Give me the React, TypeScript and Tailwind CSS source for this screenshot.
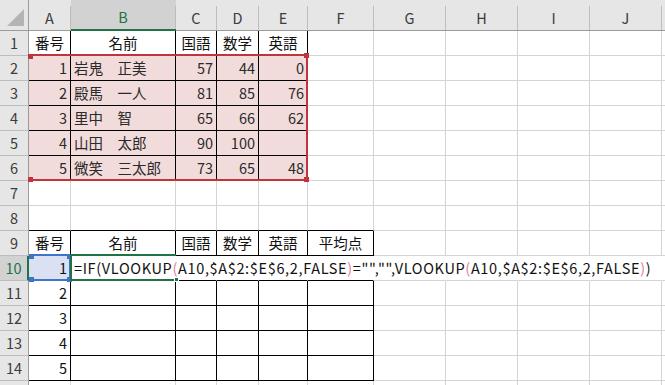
const COLS = ["A", "B", "C", "D", "E", "F", "G", "H", "I", "J", ""];
const ROWS = Array.from({ length: 15 }, (_, i) => i + 1);

const GRID_COLS = "grid grid-cols-[29px_42px_105px_41px_42px_49px_66px_72px_72px_72px_72px_1fr] grid-rows-[31px_repeat(15,25px)]";

const cells: Record<string, string> = {
  A1: "番号", B1: "名前", C1: "国語", D1: "数学", E1: "英語",
  A2: "1", B2: "岩鬼　正美", C2: "57", D2: "44", E2: "0",
  A3: "2", B3: "殿馬　一人", C3: "81", D3: "85", E3: "76",
  A4: "3", B4: "里中　智", C4: "65", D4: "66", E4: "62",
  A5: "4", B5: "山田　太郎", C5: "90", D5: "100",
  A6: "5", B6: "微笑　三太郎", C6: "73", D6: "65", E6: "48",
  A9: "番号", B9: "名前", C9: "国語", D9: "数学", E9: "英語", F9: "平均点",
  A10: "1", A11: "2", A12: "3", A13: "4", A14: "5",
};

const inTable1 = (r: number, c: number) => r >= 1 && r <= 6 && c <= 4;
const inTable2 = (r: number, c: number) => r >= 9 && r <= 14 && c <= 5;
const inTable = (r: number, c: number) => inTable1(r, c) || inTable2(r, c);

function Formula() {
  const p = "text-[#e27c9d]";
  return (
    <span className="relative z-10 tracking-[0.65px] text-[#111]">
      =IF(VLOOKUP<span className={p}>(</span>A10,$A$2:$E$6,2,FALSE<span className={p}>)</span>
      ="","",VLOOKUP<span className={p}>(</span>A10,$A$2:$E$6,2,FALSE<span className={p}>)</span>)
    </span>
  );
}

function Cell({ r, c }: { r: number; c: number }) {
  const key = COLS[c] + r;
  const text = cells[key];
  const pink = r >= 2 && r <= 6 && c <= 4;
  const header = r === 1 || r === 9;
  const num = text !== undefined && /^\d+$/.test(text);

  let right = inTable(r, c) ? "border-r-black" : "border-r-[#d4d4d4]";
  if (r === 10 && c >= 1) right = "border-r-transparent";
  const bottom = inTable(r, c) || (r === 8 && c <= 5) ? "border-b-black" : "border-b-[#d4d4d4]";

  const align = header ? "justify-center" : num ? "justify-end pr-[3px]" : "justify-start pl-[3px]";
  const bg = pink ? "bg-[#f2dcdb]" : r === 10 && c === 0 ? "bg-[#d9e1f2]" : "bg-white";

  return (
    <div className={`flex items-center whitespace-nowrap border-r border-b pt-[1px] ${right} ${bottom} ${align} ${bg} ${pink ? "text-[#2a2a2a]" : "text-[#111]"}`}>
      {r === 10 && c === 1 ? <Formula /> : text}
    </div>
  );
}

function Handle({ pos, color }: { pos: string; color: string }) {
  return <div className={`absolute h-[5px] w-[5px] ${pos} ${color}`} />;
}

export default function App() {
  return (
    <div className="relative h-[385px] w-[665px] overflow-hidden bg-white font-['Noto_Sans_CJK_JP',sans-serif] text-[14.5px] leading-none">
      <div className={GRID_COLS}>
        {/* corner */}
        <div className="relative border-r border-b border-r-[#9b9b9b] border-b-[#9b9b9b] bg-[#e6e6e6]">
          <svg className="absolute right-[3px] bottom-[3px]" width="18" height="18" viewBox="0 0 18 18">
            <polygon points="17,0 17,17 0,17" fill="#b4b4b4" />
          </svg>
        </div>
        {/* column headers */}
        {COLS.map((col, c) => (
          <div
            key={c}
            className={
              c === 1
                ? "flex border-b-2 border-b-[#217346] bg-[#d2d2d2]"
                : "flex border-b border-b-[#9b9b9b] bg-[#e6e6e6]"
            }
          >
            <div
              className={`mt-[6px] flex flex-1 items-center justify-center border-r border-r-[#bdbdbd] ${
                c === 1 ? "text-[#217346]" : "text-[#3c3c3c]"
              }`}
            >
              {col}
            </div>
          </div>
        ))}
        {ROWS.map((r) => (
          <div key={r} className="contents">
            <div
              className={
                r === 10
                  ? "flex items-center justify-center border-r-2 border-b border-r-[#217346] border-b-[#bdbdbd] bg-[#d2d2d2] pt-[1px] text-[#217346]"
                  : "flex items-center justify-center border-r border-b border-r-[#9b9b9b] border-b-[#bdbdbd] bg-[#e6e6e6] pt-[1px] text-[#3c3c3c]"
              }
            >
              {r < 15 ? r : null}
            </div>
            {COLS.map((_, c) => (
              <Cell key={c} r={r} c={c} />
            ))}
          </div>
        ))}
      </div>

      {/* selection layer, same grid as the sheet */}
      <div className={`pointer-events-none absolute inset-0 ${GRID_COLS}`}>
        {/* $A$2:$E$6 */}
        <div className="relative col-start-2 col-end-7 row-start-3 row-end-8 -mt-[2px] border-t-2 border-r-2 border-b-2 border-[#c0343c]">
          <Handle pos="-left-[1px] -top-[2px] w-[4px]" color="bg-[#c0343c]" />
          <Handle pos="-right-[3px] -top-[3px]" color="bg-[#c0343c]" />
          <Handle pos="-left-[1px] -bottom-[3px] w-[4px]" color="bg-[#c0343c]" />
          <Handle pos="-right-[3px] -bottom-[3px]" color="bg-[#c0343c]" />
        </div>
        {/* A10 */}
        <div className="relative col-start-2 row-start-11 -mt-[2px] border-t-2 border-r-2 border-b-2 border-[#3f74c8]">
          <Handle pos="left-0 -top-[2px] w-[4px]" color="bg-[#3f74c8]" />
          <Handle pos="-right-[3px] -top-[2px]" color="bg-[#3f74c8]" />
          <Handle pos="left-0 -bottom-[3px] w-[4px]" color="bg-[#3f74c8]" />
          <Handle pos="-right-[3px] -bottom-[3px]" color="bg-[#3f74c8]" />
        </div>
        {/* active cell B10 */}
        <div className="relative col-start-3 row-start-11 -mt-[2px] -ml-[1px] border-t-2 border-l-2 border-b-2 border-[#217346]">
          <Handle pos="-right-[3px] -bottom-[3px] border border-white" color="bg-[#217346]" />
        </div>
      </div>
    </div>
  );
}
